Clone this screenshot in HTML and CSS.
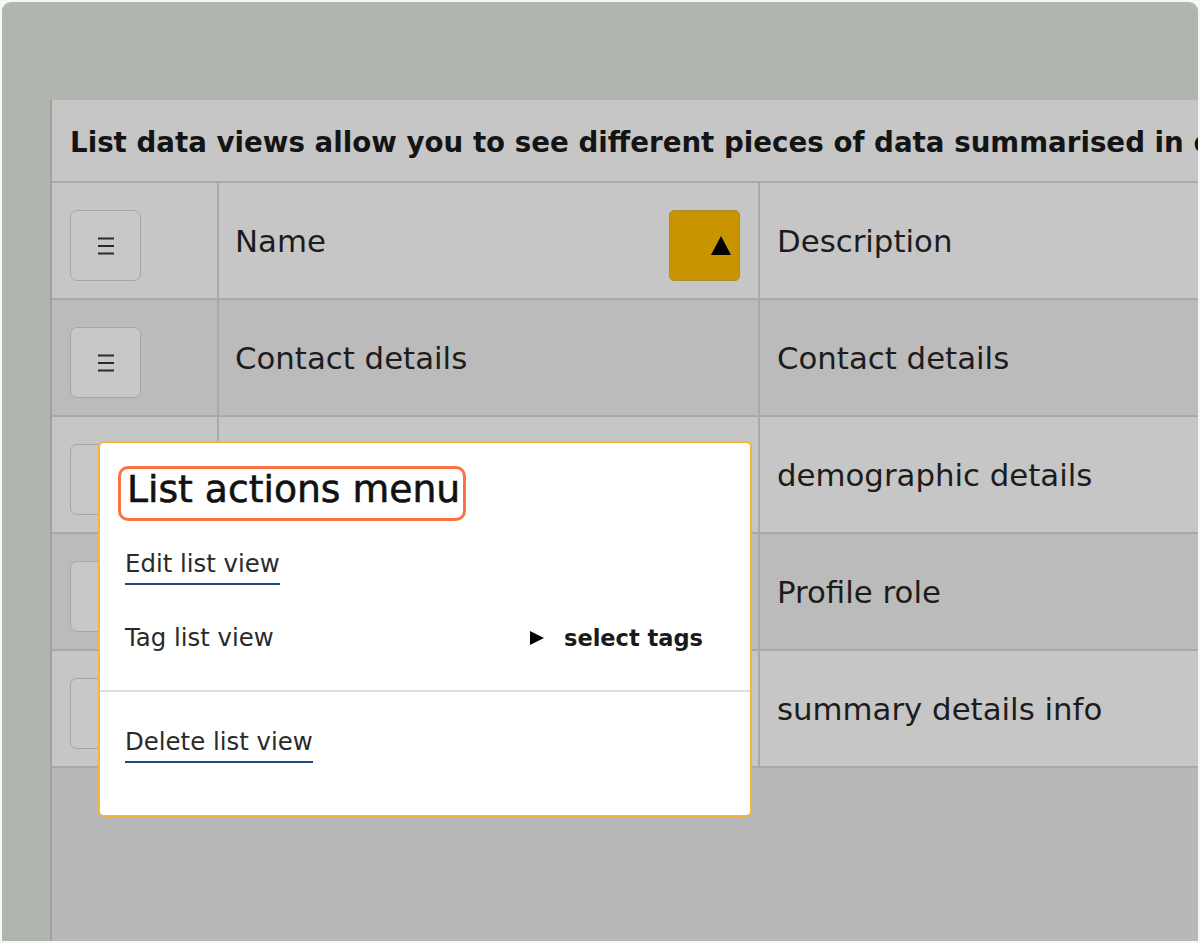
FILE: index.html
```html
<!DOCTYPE html>
<html lang="en">
<head>
<meta charset="utf-8">
<title>List data views</title>
<link rel="stylesheet" href="styles.css">
</head>
<body>
<div class="frame">
  <div class="panel">
    <div class="intro">List data views allow you to see different pieces of data summarised in one place.</div>
    <div class="table">
      <div class="row head">
        <div class="cell c1"><button class="menu-btn" aria-label="List actions"><svg width="18" height="18" viewBox="0 0 18 18"><path d="M1 1.5h16M1 9h16M1 16.5h16" stroke="#2b2b2b" stroke-width="2"/></svg></button></div>
        <div class="cell c2"><span>Name</span><button class="sort" aria-label="Sort ascending"><svg width="20" height="19" viewBox="0 0 20 19"><path d="M10 0L20 19H0Z" fill="#000"/></svg></button></div>
        <div class="cell c3"><span>Description</span></div>
      </div>
      <div class="row dark">
        <div class="cell c1"><button class="menu-btn" aria-label="List actions"><svg width="18" height="18" viewBox="0 0 18 18"><path d="M1 1.5h16M1 9h16M1 16.5h16" stroke="#2b2b2b" stroke-width="2"/></svg></button></div>
        <div class="cell c2"><span>Contact details</span></div>
        <div class="cell c3"><span>Contact details</span></div>
      </div>
      <div class="row">
        <div class="cell c1"><button class="menu-btn" aria-label="List actions"><svg width="18" height="18" viewBox="0 0 18 18"><path d="M1 1.5h16M1 9h16M1 16.5h16" stroke="#2b2b2b" stroke-width="2"/></svg></button></div>
        <div class="cell c2"></div>
        <div class="cell c3"><span>demographic details</span></div>
      </div>
      <div class="row dark">
        <div class="cell c1"><button class="menu-btn" aria-label="List actions"><svg width="18" height="18" viewBox="0 0 18 18"><path d="M1 1.5h16M1 9h16M1 16.5h16" stroke="#2b2b2b" stroke-width="2"/></svg></button></div>
        <div class="cell c2"></div>
        <div class="cell c3"><span>Profile role</span></div>
      </div>
      <div class="row">
        <div class="cell c1"><button class="menu-btn" aria-label="List actions"><svg width="18" height="18" viewBox="0 0 18 18"><path d="M1 1.5h16M1 9h16M1 16.5h16" stroke="#2b2b2b" stroke-width="2"/></svg></button></div>
        <div class="cell c2"></div>
        <div class="cell c3"><span>summary details info</span></div>
      </div>
    </div>

    <div class="popup" role="menu">
      <h2 class="popup-title">List actions menu</h2>
      <div class="popup-body">
        <a class="item link" href="#">Edit list view</a>
        <div class="item tag-row">
          <span>Tag list view</span>
          <span class="select-tags"><svg width="14" height="14" viewBox="0 0 14 14"><path d="M0 0L14 7L0 14Z" fill="#000"/></svg>select tags</span>
        </div>
      </div>
      <div class="popup-foot">
        <a class="item link" href="#">Delete list view</a>
      </div>
    </div>
  </div>
</div>
</body>
</html>
```

FILE: styles.css
```css
* { box-sizing: border-box; }

html, body {
  margin: 0;
  padding: 0;
  background: #f7f7f7;
}

body {
  width: 1200px;
  height: 943px;
  overflow: hidden;
  font-family: "DejaVu Sans", "Noto Sans", sans-serif;
  color: #1c1c1c;
}

.frame {
  margin: 2px 2px 0 2px;
  height: 939px;
  background: #b0b6ae;
  border-radius: 9px 9px 0 0;
  padding: 98px 0 0 48px;
  overflow: hidden;
}

.panel {
  position: relative;
  height: 100%;
  background: #b8b8b8;
  border-left: 2px solid #9ea29d;
}

.intro {
  height: 83px;
  background: #c6c6c6;
  border-bottom: 2px solid #a9a9a9;
  padding: 3px 0 0 18px;
  display: flex;
  align-items: center;
  font-size: 27.7px;
  font-weight: 700;
  white-space: nowrap;
  overflow: hidden;
  color: #141414;
}

.row {
  display: flex;
  height: 117px;
  background: #c6c6c6;
  border-bottom: 2px solid #a9a9a9;
}

.row.dark { background: #bbbbbb; }

.cell {
  display: flex;
  align-items: center;
  font-size: 30.8px;
  color: #1c1c1c;
}

.c1 {
  width: 167px;
  border-right: 2px solid #a9a9a9;
  padding-left: 18px;
}

.c2 {
  width: 541px;
  border-right: 2px solid #a9a9a9;
  padding: 0 18px 0 16px;
  justify-content: space-between;
}

.c3 {
  flex: 1;
  padding-left: 17px;
}

.menu-btn {
  width: 71px;
  height: 71px;
  margin-top: 10px;
  background: #c8c8c8;
  border: 1.5px solid #a6a6a6;
  border-radius: 7px;
  display: flex;
  align-items: center;
  justify-content: center;
  padding: 0;
}

.sort {
  width: 71px;
  height: 71px;
  margin-top: 10px;
  background: #c89400;
  border: 1px solid #b08a30;
  border-radius: 5px;
  display: flex;
  align-items: center;
  justify-content: flex-end;
  padding: 0 8px 0 0;
}

.popup {
  position: absolute;
  left: 46px;
  top: 341px;
  width: 654px;
  height: 376px;
  background: #ffffff;
  border: 2px solid #f5b43a;
  border-radius: 6px;
  display: flex;
  flex-direction: column;
}

.popup-title {
  align-self: flex-start;
  margin: 23px 0 0 18px;
  padding: 0 3px 0 6px;
  height: 55px;
  line-height: 40px;
  border: 3px solid #fb7243;
  border-radius: 10px;
  font-size: 37.7px;
  font-weight: 400;
  -webkit-text-stroke: 0.6px #111;
  color: #111;
  white-space: nowrap;
}

.popup-body {
  padding: 27.5px 47px 37.5px 25px;
  border-bottom: 2px solid #dedede;
}

.item {
  font-size: 24.4px;
  line-height: 30px;
  color: #2a2a2a;
}

.link {
  display: inline-block;
  text-decoration: none;
  border-bottom: 2px solid #1e4b78;
  padding-bottom: 4px;
}

.tag-row {
  display: flex;
  justify-content: space-between;
  align-items: center;
  margin-top: 38px;
}

.select-tags {
  display: flex;
  align-items: center;
  gap: 20px;
  font-size: 22.5px;
  font-weight: 700;
  color: #1a1a1a;
}

.popup-foot {
  padding: 34.5px 25px 0 25px;
}
```
